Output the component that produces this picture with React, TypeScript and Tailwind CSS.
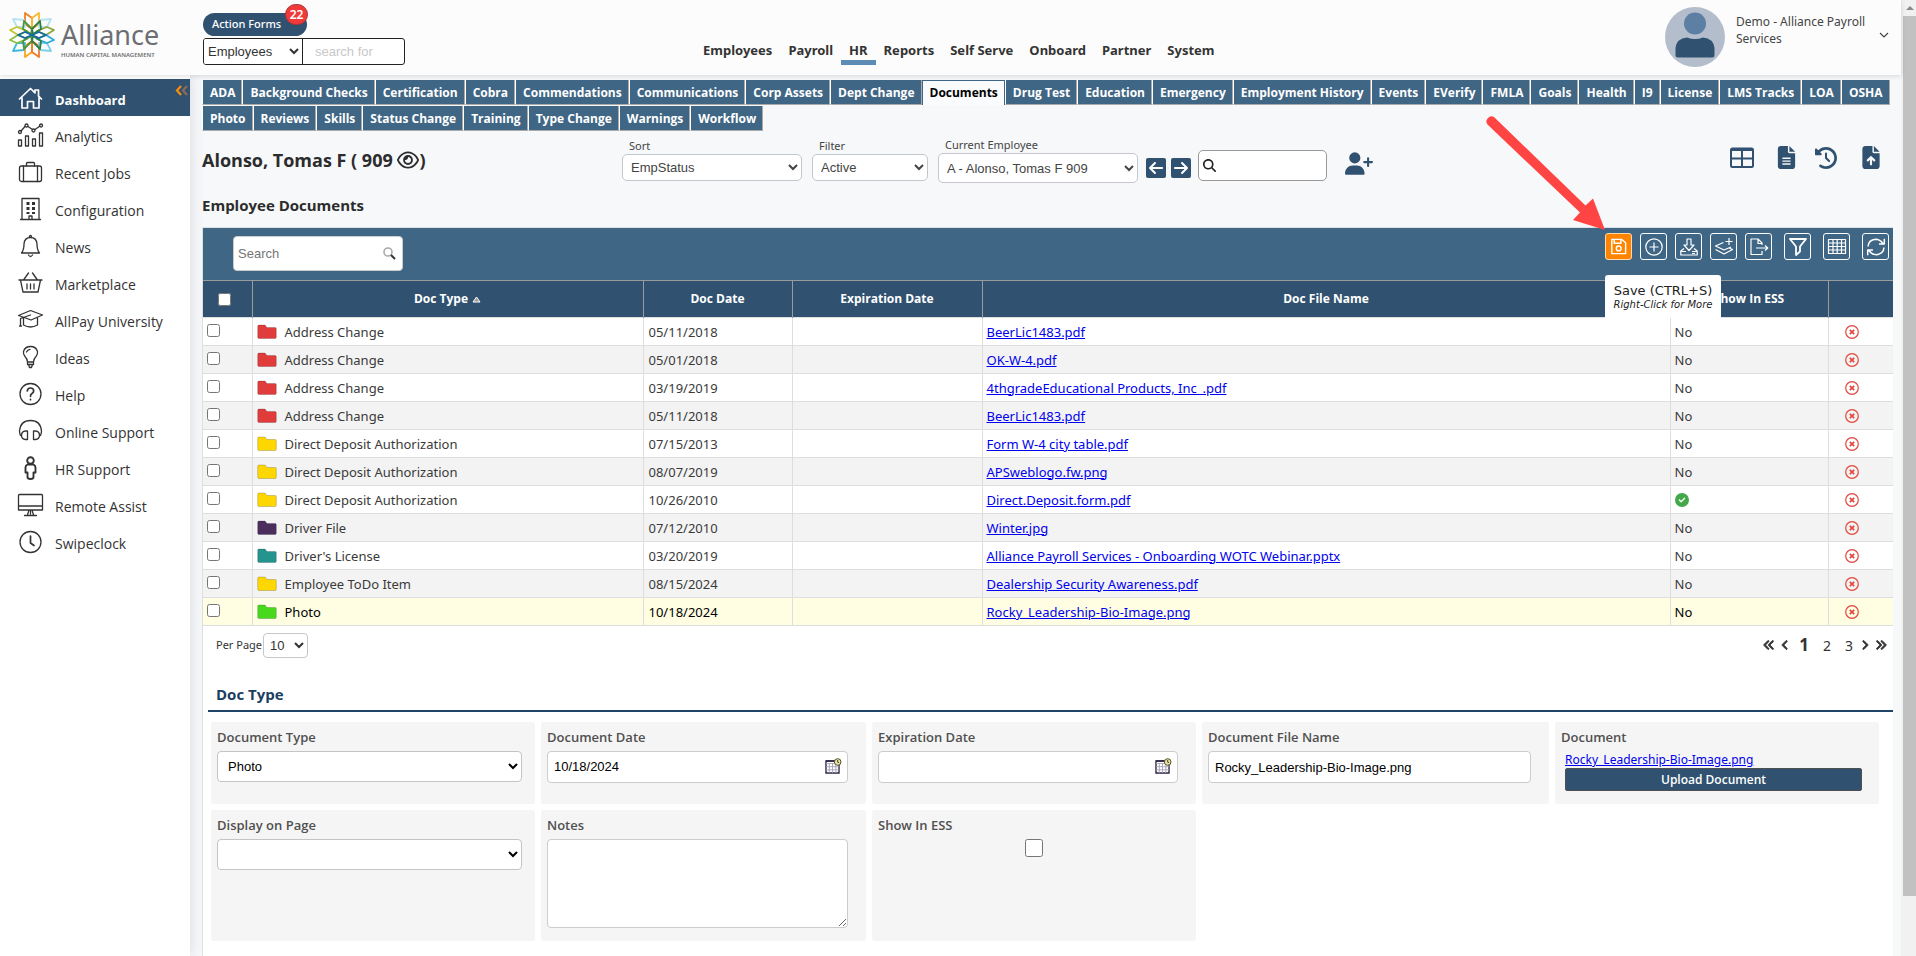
import React from "react";
import {
  FaAngleLeft,
  FaAngleRight,
  FaAnglesLeft,
  FaAnglesRight,
  FaArrowLeft,
  FaArrowRight,
  FaCircleCheck,
  FaClockRotateLeft,
  FaFileArrowUp,
  FaFileLines,
  FaMagnifyingGlass,
  FaRegEye,
  FaUserPlus,
} from "react-icons/fa6";

type IconProps = { className?: string; children: React.ReactNode };

function Line({ className = "size-6", children }: IconProps) {
  return (
    <svg
      viewBox="0 0 26 24"
      className={className}
      fill="none"
      stroke="currentColor"
      strokeWidth="1.3"
      strokeLinecap="round"
      strokeLinejoin="round"
      aria-hidden="true"
    >
      {children}
    </svg>
  );
}

const sideItems: { label: string; icon: React.ReactNode }[] = [
  {
    label: "Dashboard",
    icon: (
      <g strokeWidth="1.7">
        <path d="M2 13 13 2.500l4.500 4.300V4h3.500v6.200l3 2.800M4.500 11.500V22H10v-6.500h6V22h5.500V11.500" />
      </g>
    ),
  },
  {
    label: "Analytics",
    icon: (
      <>
        <path d="M1 17h3v6H1zM8 13h3v10H8zM15 16h3v7h-3zM22 10h3v13h-3z" />
        <path d="m3.500 8 4-4.500M10.500 3.500 15 6.500M17.500 6.500l5-3.500" />
        <circle cx="2.500" cy="9" r="1.500" />
        <circle cx="9" cy="2.500" r="1.500" />
        <circle cx="16" cy="7.500" r="1.500" />
        <circle cx="23.500" cy="2.500" r="1.500" />
      </>
    ),
  },
  {
    label: "Recent Jobs",
    icon: (
      <>
        <rect x="2" y="6" width="22" height="15.500" rx="2" />
        <path d="M9 6V3.500q0-1 1-1h6q1 0 1 1V6M6 6v15.500M20 6v15.500" />
      </>
    ),
  },
  {
    label: "Configuration",
    icon: (
      <>
        <path d="M4.500 22.500v-21h17v21M3 22.500h20M11.500 22.500V19h3v3.500" />
        <g fill="currentColor" stroke="none">
          <path d="M9 5h3v3H9zM14.500 5h3v3h-3zM9 10h3v3H9zM14.500 10h3v3h-3zM9 15h3v2H9zM14.500 15h3v2h-3z" />
        </g>
      </>
    ),
  },
  {
    label: "News",
    icon: (
      <path d="M4 19q2.500-3 2.500-9Q7 3.500 13 3.500T19.500 10q0 6 2.500 9ZM11.800 3.500q0-2 1.200-2t1.200 2M11 21q2 3 4 0" />
    ),
  },
  {
    label: "Marketplace",
    icon: (
      <path d="M1.500 9h23M3 9l2.500 12h15L23 9M11 2 6 9M15 2l5 7M9.500 13v5M13 13v5M16.500 13v5" />
    ),
  },
  {
    label: "AllPay University",
    icon: (
      <path d="M1 7.500 13 2.500 25 7 13.500 12ZM6 10v7q7 4 14 0v-7.500M13 7 3 10.500V18M2 18h2" />
    ),
  },
  {
    label: "Ideas",
    icon: (
      <path d="M10 17q0-3-2.500-5.500Q5.500 9 6 6.500 7.500 1.500 13 1.500t7 5q.5 2.500-1.500 5Q16 14 16 17ZM10 17v2.500h6V17M11 19.500l1 3h2l1-3M9 7q1-2.500 3.500-2.700" />
    ),
  },
  {
    label: "Help",
    icon: (
      <>
        <circle cx="13" cy="12" r="10.500" />
        <path strokeWidth="1.700" d="M9.800 9q.2-3 3.200-3t3.200 2.800q0 1.700-1.700 2.700T13 14.300M13 17.300v.4" />
      </>
    ),
  },
  {
    label: "Online Support",
    icon: (
      <>
        <path d="M3 16.500Q2 14 2 12 3 1.500 13 1.500T24 12q0 2-1 4.500" />
        <path d="M10 12v8.500H8q-4-.5-4-4.300T8 12ZM16 12v8.500h2q4-.5 4-4.300T18 12Z" />
      </>
    ),
  },
  {
    label: "HR Support",
    icon: (
      <g strokeWidth="1.900">
        <circle cx="13" cy="4.500" r="3.300" />
        <path d="M10 8.500h6q2 1 2 3v5h-2V21q0 2-3 2t-3-2v-4.500H8v-5q0-2 2-3Z" />
      </g>
    ),
  },
  {
    label: "Remote Assist",
    icon: (
      <path d="M2 1.500h22q1 0 1 1V17H1V2.500q0-1 1-1ZM1 13h24M11.500 17l-1.500 5M14.500 17l1.500 5M7 22.500h12M13 18v3" />
    ),
  },
  {
    label: "Swipeclock",
    icon: (
      <>
        <circle cx="13" cy="12" r="10.500" />
        <path strokeWidth="1.700" d="M13 6v7l3.500 2.500" />
      </>
    ),
  },
];

const navItems = ["Employees", "Payroll", "HR", "Reports", "Self Serve", "Onboard", "Partner", "System"];

const tabs = [
  "ADA", "Background Checks", "Certification", "Cobra", "Commendations", "Communications",
  "Corp Assets", "Dept Change", "Documents", "Drug Test", "Education", "Emergency",
  "Employment History", "Events", "EVerify", "FMLA", "Goals", "Health", "I9", "License",
  "LMS Tracks", "LOA", "OSHA", "Photo", "Reviews", "Skills", "Status Change", "Training",
  "Type Change", "Warnings", "Workflow",
];

const RED = "#e03c3c";
const YELLOW = "#ffd700";

const rows = [
  { type: "Address Change", color: RED, date: "05/11/2018", file: "BeerLic1483.pdf", ess: false },
  { type: "Address Change", color: RED, date: "05/01/2018", file: "OK-W-4.pdf", ess: false },
  { type: "Address Change", color: RED, date: "03/19/2019", file: "4thgradeEducational Products, Inc_.pdf", ess: false },
  { type: "Address Change", color: RED, date: "05/11/2018", file: "BeerLic1483.pdf", ess: false },
  { type: "Direct Deposit Authorization", color: YELLOW, date: "07/15/2013", file: "Form W-4 city table.pdf", ess: false },
  { type: "Direct Deposit Authorization", color: YELLOW, date: "08/07/2019", file: "APSweblogo.fw.png", ess: false },
  { type: "Direct Deposit Authorization", color: YELLOW, date: "10/26/2010", file: "Direct.Deposit.form.pdf", ess: true },
  { type: "Driver File", color: "#4b2e5e", date: "07/12/2010", file: "Winter.jpg", ess: false },
  { type: "Driver's License", color: "#23958e", date: "03/20/2019", file: "Alliance Payroll Services - Onboarding WOTC Webinar.pptx", ess: false },
  { type: "Employee ToDo Item", color: YELLOW, date: "08/15/2024", file: "Dealership Security Awareness.pdf", ess: false },
  { type: "Photo", color: "#48d91f", date: "10/18/2024", file: "Rocky_Leadership-Bio-Image.png", ess: false },
];

const petals: [string, string][] = [
  ["M-7-22 0-17V-6L-7-11Z", "#f08022"],
  ["M7-22 0-17V-6L7-11Z", "#fbb92e"],
  ["M-7 22 0 17V6L-7 11Z", "#fba51c"],
  ["M7 22 0 17V6L7 11Z", "#f07a22"],
  ["M-19-16-8-15-7-8-15-8Z", "#b5e3f2"],
  ["M19-16 8-15 7-8 15-8Z", "#b5e3f2"],
  ["M-19 16-8 15-7 8-15 8Z", "#3fb8de"],
  ["M19 16 8 15 7 8 15 8Z", "#7fd0e8"],
  ["M-22-5-15-8-5-4-14 0Z", "#c3c62f"],
  ["M22-5 15-8 5-4 14 0Z", "#8fa63a"],
  ["M-22 5-15 8-5 4-14 0Z", "#8dc040"],
  ["M22 5 15 8 5 4 14 0Z", "#2fa9dc"],
  ["M0-6-8-14-9-6-1-1Z", "#4f9440"],
  ["M0-6 8-14 9-6 1-1Z", "#2f7f45"],
  ["M0 6-8 14-9 6-1 1Z", "#4f9440"],
  ["M0 6 8 14 9 6 1 1Z", "#2f7f45"],
  ["M-14 0-7-3 0 0-7 3Z", "#12699c"],
  ["M14 0 7-3 0 0 7 3Z", "#12699c"],
];

function Logo() {
  return (
    <a href="#home" className="flex items-center gap-[5px] pl-2" aria-label="Alliance Human Capital Management">
      <svg viewBox="-24 -24 48 48" className="size-12" fill="none" strokeWidth="1.800" strokeLinejoin="round" aria-hidden="true">
        {petals.map(([d, c]) => (
          <path key={d} d={d} stroke={c} />
        ))}
      </svg>
      <span className="flex flex-col pt-2">
        <span className="text-[27px] leading-8 text-[#6d6e72]">Alliance</span>
        <span className="text-[6px] leading-2 font-semibold whitespace-nowrap text-[#6d6e72]">HUMAN CAPITAL MANAGEMENT</span>
      </span>
    </a>
  );
}

function Header() {
  return (
    <header className="relative z-10 flex h-[75px] items-start bg-[#fcfcfc] shadow-[0_1px_5px_rgba(0,0,0,0.14)]">
      <div className="w-[203px] pt-[11px]">
        <Logo />
      </div>
      <div className="w-[492px] pt-[13px]">
        <button className="relative flex h-[23px] w-[104px] items-center rounded-full bg-[#305270] pl-[9px] text-[11px] font-medium text-white">
          Action Forms
          <span className="absolute -top-[9px] -right-px flex h-[21px] w-[23px] items-center justify-center rounded-full border border-[#a33] bg-[#f03a3a] text-[12px] font-semibold">
            22
          </span>
        </button>
        <div className="mt-0.5 flex h-[27px] w-[202px] overflow-hidden rounded-[3px] border border-[#222] bg-white font-[Liberation_Sans] text-[13px] text-[#333]">
          <select aria-label="Search category" className="w-[99px] bg-white">
            <option>Employees</option>
          </select>
          <input
            aria-label="Search for"
            placeholder="search for"
            className="w-[102px] border-l border-[#222] pl-3 placeholder:text-[#c8c8c8]"
          />
        </div>
      </div>
      <nav className="flex pt-10 text-[13px] font-bold text-[#333]">
        {navItems.map((n) => (
          <a
            key={n}
            href={"#" + n}
            className={
              n === "HR"
                ? "h-[25px] border-b-5 border-[#5c8bb3] px-2 leading-5"
                : "h-[25px] px-2 leading-5"
            }
          >
            {n}
          </a>
        ))}
      </nav>
      <div className="ml-auto flex pt-[7px] pr-3">
        <svg viewBox="0 0 60 60" className="size-[60px]" aria-hidden="true">
          <circle cx="30" cy="30" r="30" fill="#b3bdcb" />
          <circle cx="30" cy="16.500" r="11" fill="#5c7fa3" />
          <path d="M10.500 48V41q1-9.500 11.500-10.500 8 3 16 0Q48.500 31.500 49.500 41v7q0 2.500-2.500 2.500H13q-2.500 0-2.500-2.500Z" fill="#305270" />
        </svg>
        <p className="ml-[11px] w-[143px] pt-1.5 text-[12px] leading-[17px] text-[#444]">
          Demo - Alliance Payroll Services
        </p>
        <button aria-label="Account menu" className="mt-6 h-2">
          <svg viewBox="0 0 10 6" className="h-1.5 w-2.5" fill="none" stroke="#444" strokeWidth="1.200" aria-hidden="true">
            <path d="m1 1 4 4 4-4" />
          </svg>
        </button>
      </div>
    </header>
  );
}

function Sidebar() {
  return (
    <aside className="w-[190px] shrink-0 bg-white pt-1 shadow-[0_0_14px_rgba(40,50,70,0.16)]">
      <nav className="font-[Open_Sans] text-[14px] font-medium text-[#333]">
        {sideItems.map((s, i) => (
          <a
            key={s.label}
            href={"#" + s.label}
            className={
              i === 0
                ? "relative flex h-[37px] items-center bg-[#305270] pl-[17px] text-[13px] font-bold text-white"
                : "relative flex h-[37px] items-center pl-[17px]"
            }
          >
            <Line className="h-6 w-[27px] shrink-0">{s.icon}</Line>
            <span className="ml-[11px] pt-1 leading-5">{s.label}</span>
            {i === 0 && (
              <svg viewBox="0 0 13 11" className="absolute top-1.5 right-0.5 h-[11px] w-[13px]" fill="none" strokeWidth="2.200" aria-hidden="true">
                <path d="M6 1 2 5.500 6 10" stroke="#f78b0c" />
                <path d="m12 1-4 4.500 4 4.500" stroke="#8a6d55" />
              </svg>
            )}
          </a>
        ))}
      </nav>
    </aside>
  );
}

function Tabs() {
  return (
    <nav className="-mr-2 flex flex-wrap pt-[5px] font-[Open_Sans] text-[12px] leading-[25px] font-bold">
      {tabs.map((t) => (
        <a
          key={t}
          href={"#" + t}
          className={
            t === "Documents"
              ? "mb-px h-[25px] border-x border-t border-[#406685] bg-[#fafbfc] pr-1.5 pl-[7px] leading-6 text-black"
              : "mb-px h-[25px] border border-t-0 border-[#aaa] border-l-white bg-[#406685] pr-1.5 pl-[7px] text-white"
          }
        >
          {t}
        </a>
      ))}
    </nav>
  );
}

function EmployeeBar() {
  return (
    <div className="flex h-[59px] items-start">
      <h1 className="w-[420px] pt-3.5 font-[Open_Sans] text-[18px] leading-7 font-bold text-[#2c2c2c]">
        Alonso, Tomas F ( 909 <FaRegEye className="inline size-[22px] align-[-4px]" aria-label="Show number" />)
      </h1>
      <div className="flex w-[180px] flex-col pt-1.5">
        <label htmlFor="sort" className="pl-[7px] text-[11px] leading-4 text-[#444]">Sort</label>
        <select id="sort" className="h-[27px] rounded-[5px] border border-[#c4c7cb] bg-white pl-1 font-[Liberation_Sans] text-[13px] text-[#444]">
          <option>EmpStatus</option>
        </select>
      </div>
      <div className="ml-2.5 flex w-[116px] flex-col pt-1.5">
        <label htmlFor="filter" className="pl-[7px] text-[11px] leading-4 text-[#444]">Filter</label>
        <select id="filter" className="h-[27px] rounded-[5px] border border-[#c4c7cb] bg-white pl-1 font-[Liberation_Sans] text-[13px] text-[#444]">
          <option>Active</option>
        </select>
      </div>
      <div className="ml-2.5 flex w-[200px] flex-col pt-[5px]">
        <label htmlFor="current" className="pl-[7px] text-[11px] leading-4 text-[#444]">Current Employee</label>
        <select id="current" className="h-[30px] rounded-[5px] border border-[#c4c7cb] bg-white pl-1 font-[Liberation_Sans] text-[13px] text-[#444]">
          <option>A - Alonso, Tomas F 909</option>
        </select>
      </div>
      <button aria-label="Previous employee" className="mt-[26px] ml-2 flex size-5 items-center justify-center rounded-[2px] bg-[#305270] text-white">
        <FaArrowLeft className="size-4" />
      </button>
      <button aria-label="Next employee" className="mt-[26px] ml-[5px] flex size-5 items-center justify-center rounded-[2px] bg-[#305270] text-white">
        <FaArrowRight className="size-4" />
      </button>
      <label className="mt-[18px] ml-[7px] flex h-[31px] w-[129px] items-center rounded-[5px] border border-[#999] bg-white pl-1">
        <FaMagnifyingGlass className="size-[13px] shrink-0 text-[#222]" />
        <input aria-label="Find employee" className="w-full min-w-0 bg-transparent px-1 text-[13px] outline-none" />
      </label>
      <button aria-label="Add employee" className="mt-5 ml-[18px] text-[#305270]">
        <FaUserPlus className="h-[23px] w-7" />
      </button>
      <div className="ml-auto flex items-center pt-3.5 pr-[13px] text-[#305270]">
        <button aria-label="Grid view" className="mr-[21px]">
          <svg viewBox="0 0 24 21" className="h-[21px] w-6" fill="none" stroke="currentColor" strokeWidth="2" aria-hidden="true">
            <rect x="1" y="1.500" width="22" height="18.500" rx="1.500" />
            <path d="M1 3h22M1 11.500h22M12 3v17" />
          </svg>
        </button>
        <button aria-label="Report" className="mr-[17px]"><FaFileLines className="h-[23px] w-[23px]" /></button>
        <button aria-label="History" className="mr-[25px]"><FaClockRotateLeft className="size-[22px]" /></button>
        <button aria-label="Upload file"><FaFileArrowUp className="h-[23px] w-[18px]" /></button>
      </div>
    </div>
  );
}

const toolIcons: { label: string; wide: boolean; art: React.ReactNode }[] = [
  {
    label: "Add",
    wide: false,
    art: (
      <>
        <circle cx="10" cy="10" r="8.200" />
        <path d="M10 5.500v9M5.500 10h9" />
      </>
    ),
  },
  {
    label: "Download",
    wide: false,
    art: <path d="M8 2h4v6h3l-5 5.500L5 8h3ZM5 11.500 1.800 14v4h16.400v-4L15 11.500M1.800 14.500H7M13 14.500h5.200M13 16.500h3" />,
  },
  {
    label: "Add layer",
    wide: false,
    art: <path d="M9.500 5.500 1.500 9l8.500 4 7-3M1.500 12.500 10 17l8.500-4.500-3-1.300M15 1v7M11.500 4.500h7" />,
  },
  {
    label: "Export",
    wide: false,
    art: <path d="M13 8V6L9 2H2v15.500h11V14M9 2v4.500h4M7 11h11.500M16 8.500l2.800 2.500-2.800 2.500" />,
  },
  { label: "Filter", wide: true, art: <path strokeWidth="1.800" d="M2 2h16l-6 7.500v5L8 18V9.500Z" /> },
  {
    label: "Columns",
    wide: true,
    art: <path d="M1.500 2.500h17v14h-17ZM1.500 6h17M1.500 9.500h17M1.500 13h17M6 2.500v14M10.200 2.500v14M14.500 2.500v14" />,
  },
  {
    label: "Refresh",
    wide: true,
    art: <path strokeWidth="1.500" d="M2 9.500Q2.500 3 9.500 2.300q4.500 0 7.500 4.200M18.300 1.800V7H13M18 10.500q-.5 6.500-7.500 7.200-4.500 0-7.500-4.200M1.700 18.200V13H7" />,
  },
];

function Toolbar() {
  return (
    <div className="flex h-[53px] items-start border-t border-[#dcdfe3] bg-[#406685]">
      <label className="mt-2 ml-[30px] flex h-[35px] w-[170px] items-center rounded-[4px] border border-[#ccc] bg-white pr-1.5">
        <input
          aria-label="Search documents"
          placeholder="Search"
          className="w-full min-w-0 bg-transparent pl-1 font-[Liberation_Sans] text-[13px] outline-none placeholder:text-[#757575]"
        />
        <svg viewBox="0 0 13 13" className="size-[13px] shrink-0" fill="none" aria-hidden="true">
          <circle cx="5" cy="5" r="4" stroke="#aaa" strokeWidth="1.600" />
          <path d="m8 8 4 4" stroke="#333" strokeWidth="2" />
        </svg>
      </label>
      <div className="relative mt-[5px] mr-1 ml-auto flex">
        <button aria-label="Save" className="flex size-[27px] items-center justify-center rounded-[3px] border border-[#ffd9ad] bg-[#ff8400] text-white">
          <svg viewBox="0 0 20 20" className="size-[19px]" fill="none" stroke="currentColor" strokeWidth="1.500" aria-hidden="true">
            <path d="M3 2.500h10.500L17.500 6v11.500H3ZM5.500 2.500v4h7v-4" />
            <circle cx="10.200" cy="12" r="2.500" />
          </svg>
        </button>
        {toolIcons.map((t) => (
          <button
            key={t.label}
            aria-label={t.label}
            className={
              t.wide
                ? "ml-3 flex size-[27px] items-center justify-center rounded-[3px] border border-white text-white"
                : "ml-2 flex size-[27px] items-center justify-center rounded-[3px] border border-white text-white"
            }
          >
            <svg viewBox="0 0 20 20" className="size-[20px]" fill="none" stroke="currentColor" strokeWidth="1.200" strokeLinejoin="round" aria-hidden="true">
              {t.art}
            </svg>
          </button>
        ))}
        <div role="tooltip" className="absolute top-[42px] left-0 z-10 h-[43px] w-[116px] rounded-t-[3px] bg-white pt-2 text-center font-[DejaVu_Sans] text-[#222]">
          <p className="text-[13px] leading-4">Save (CTRL+S)</p>
          <p className="text-[10px] leading-3 italic">Right-Click for More</p>
        </div>
        <svg viewBox="0 0 122 116" className="pointer-events-none absolute -top-[118px] -left-[120px] h-[116px] w-[122px]" fill="#ff4444" aria-hidden="true">
          <path d="M9.500 2.500 100.500 90.500l7.500-7L120 115 88 105l7-7.500L2.500 9.500A5 5 0 0 1 9.500 2.500Z" />
        </svg>
      </div>
    </div>
  );
}

function Folder({ color }: { color: string }) {
  return (
    <svg viewBox="0 0 20 16" className="h-4 w-5 shrink-0" aria-hidden="true">
      <path d="M2 1h6l2 2.500h8q1.300 0 1.300 1.300v8.400q0 1.300-1.300 1.300H2q-1.300 0-1.300-1.300V2.300Q.7 1 2 1Z" fill={color} stroke="#000" strokeOpacity="0.180" />
    </svg>
  );
}

function DocumentTable() {
  const head = "border-x border-[#9a9a9a] font-bold first:border-l-0 last:border-r-0";
  const cell = "border-x border-[#dedede] first:border-l-0 last:border-r-0";
  return (
    <table className="w-full table-fixed border-collapse text-[13px] text-[#3a3a3a]">
      <colgroup>
        <col className="w-[49px]" />
        <col className="w-[391px]" />
        <col className="w-[149px]" />
        <col className="w-[190px]" />
        <col />
        <col className="w-[158px]" />
        <col className="w-[65px]" />
      </colgroup>
      <thead>
        <tr className="h-[37px] border-t border-[#9a9a9a] bg-[#305270] font-[Open_Sans] text-[12px] text-white">
          <th className={head}>
            <input type="checkbox" aria-label="Select all documents" className="mr-1.5 block size-[13px] justify-self-center" />
          </th>
          <th className={head}>
            Doc Type{" "}
            <svg viewBox="0 0 9 7" className="ml-px inline h-[7px] w-[9px] align-baseline" fill="#999" stroke="#fff" aria-hidden="true">
              <path d="M4.500 1 8 6H1Z" />
            </svg>
          </th>
          <th className={head}>Doc Date</th>
          <th className={head}>Expiration Date</th>
          <th className={head}>Doc File Name</th>
          <th className={head}>Show In ESS</th>
          <th className={head} aria-label="Delete" />
        </tr>
      </thead>
      <tbody>
        {rows.map((r, i) => (
          <tr
            key={i}
            className={
              i === rows.length - 1
                ? "h-7 border-y border-[#dedede] bg-[#fffee3] text-black"
                : "h-7 border-y border-[#dedede] bg-white even:bg-[#f3f3f3]"
            }
          >
            <td className={cell}>
              <input type="checkbox" aria-label={"Select " + r.file} className="mb-0.5 ml-1 block size-[13px]" />
            </td>
            <td className={cell}>
              <span className="flex items-center gap-2 pl-1">
                <Folder color={r.color} />
                <span className="pt-px leading-5">{r.type}</span>
              </span>
            </td>
            <td className={cell + " pt-0.5 pl-[5px]"}>{r.date}</td>
            <td className={cell} />
            <td className={cell + " pt-0.5 pl-1"}>
              <a href={"#" + i} className="text-[#0000ee] underline">{r.file}</a>
            </td>
            <td className={cell + " pt-0.5 pl-1"}>
              {r.ess ? <FaCircleCheck className="mb-0.5 size-3.5 text-[#43a84a]" aria-label="Yes" /> : "No"}
            </td>
            <td className={cell + " pl-4"}>
              <button aria-label={"Delete " + r.file} className="block">
                <svg viewBox="0 0 14 14" className="size-3.5" fill="none" stroke="#e2483d" aria-hidden="true">
                  <circle cx="7" cy="7" r="6.300" strokeWidth="1.200" />
                  <path d="m4.800 4.800 4.400 4.400M9.200 4.800 4.800 9.200" strokeWidth="1.700" />
                </svg>
              </button>
            </td>
          </tr>
        ))}
      </tbody>
    </table>
  );
}

function Pager() {
  return (
    <div className="flex h-[38px] items-center pr-1.5 pl-[13px] text-[#333]">
      <label htmlFor="perpage" className="text-[11px]">Per Page</label>
      <select id="perpage" className="ml-px h-[25px] w-[45px] rounded-[4px] border border-[#c4c7cb] bg-white pl-0.5 font-[Liberation_Sans] text-[13px]">
        <option>10</option>
      </select>
      <nav aria-label="Pages" className="ml-auto flex items-center text-[14px]">
        <a href="#first" aria-label="First page"><FaAnglesLeft strokeWidth="35" className="size-3" /></a>
        <a href="#prev" aria-label="Previous page" className="ml-1"><FaAngleLeft strokeWidth="35" className="h-3 w-3" /></a>
        <a href="#1" className="ml-2 text-[17px] leading-6 font-bold">1</a>
        <a href="#2" className="ml-3.5">2</a>
        <a href="#3" className="ml-3.5">3</a>
        <a href="#next" aria-label="Next page" className="ml-1.5"><FaAngleRight strokeWidth="35" className="h-3 w-3" /></a>
        <a href="#last" aria-label="Last page" className="ml-1"><FaAnglesRight strokeWidth="35" className="size-3" /></a>
      </nav>
    </div>
  );
}

function CalendarIcon() {
  return (
    <svg viewBox="0 0 17 16" className="h-4 w-[17px] shrink-0" fill="none" aria-hidden="true">
      <path d="M1 3h13v12H1z" fill="#fff" stroke="#2d2342" strokeWidth="1.400" />
      <path d="M1 5.500h13M1 8.700h13M1 11.800h13M4.300 5v10M7.500 5v10M10.800 5v10" stroke="#a5a3b5" strokeWidth="0.900" />
      <path d="M1 3h13" stroke="#2d2342" strokeWidth="1.500" />
      <circle cx="12.700" cy="4" r="3.300" fill="#e8e2a0" stroke="#55502f" />
      <path d="M12.700 2v2.200l1.300.5" stroke="#333" strokeWidth="0.900" />
    </svg>
  );
}

function Field({ id, label, children }: { id: string; label: string; children: React.ReactNode }) {
  return (
    <div className="flex flex-col rounded-[3px] bg-[#f5f5f5] pt-[5px] pl-1.5">
      <label htmlFor={id} className="font-[Open_Sans] text-[13px] leading-5 font-semibold text-[#505050]">{label}</label>
      <div className="pt-1">{children}</div>
    </div>
  );
}

function DateField({ id, value }: { id: string; value: string }) {
  return (
    <div className="mr-[18px] flex h-8 items-center rounded-[4px] border border-[#ccc] bg-white pr-[5px]">
      <input id={id} defaultValue={value} className="w-full min-w-0 bg-transparent pl-1.5 font-[Liberation_Sans] text-[13px] text-black outline-none" />
      <button aria-label="Pick a date" className="pb-0.5"><CalendarIcon /></button>
    </div>
  );
}

function DocForm() {
  return (
    <section>
      <div className="ml-[5px] border-b-2 border-[#1f4467] pt-4">
        <h2 className="pb-0.5 pl-2 font-[Open_Sans] text-[15px] leading-7 font-bold text-[#1a3f5f]">Doc Type</h2>
      </div>
      <div className="mt-2.5 mr-3.5 ml-2 grid grid-cols-[324fr_325fr_324fr_347fr_324fr] grid-rows-[82px_131px] gap-1.5">
        <Field id="doctype" label="Document Type">
          <select id="doctype" className="block h-[31px] w-[305px] rounded-[4px] border border-[#c4c4c4] bg-white pl-1.5 font-[Liberation_Sans] text-[13px] text-black">
            <option>Photo</option>
          </select>
        </Field>
        <Field id="docdate" label="Document Date"><DateField id="docdate" value="10/18/2024" /></Field>
        <Field id="expdate" label="Expiration Date"><DateField id="expdate" value="" /></Field>
        <Field id="filename" label="Document File Name">
          <div className="mr-[18px]">
            <input id="filename" defaultValue="Rocky_Leadership-Bio-Image.png" className="block h-8 w-full rounded-[4px] border border-[#ccc] bg-white pl-1.5 font-[Liberation_Sans] text-[13px] text-black" />
          </div>
        </Field>
        <Field id="upload" label="Document">
          <div className="mr-[17px] ml-1">
            <a href="#rocky" className="block text-[12px] leading-[17px] text-[#0000ee] underline">Rocky_Leadership-Bio-Image.png</a>
            <button id="upload" className="block h-[23px] w-full rounded-[2px] border border-[#505050] bg-[#305270] font-[Open_Sans] text-[12px] leading-5 font-semibold text-white">
              Upload Document
            </button>
          </div>
        </Field>
        <Field id="display" label="Display on Page">
          <select id="display" className="block h-[31px] w-[305px] rounded-[4px] border border-[#c4c4c4] bg-white pl-1.5 text-[13px] text-black">
            <option></option>
          </select>
        </Field>
        <Field id="notes" label="Notes">
          <div className="mr-[18px]">
            <textarea id="notes" className="block h-[89px] w-full rounded-[4px] border border-[#ccc] bg-white p-1.5 text-[13px]" />
          </div>
        </Field>
        <Field id="ess" label="Show In ESS">
          <div className="flex justify-center pr-1.5">
            <input id="ess" type="checkbox" className="size-[18px]" />
          </div>
        </Field>
      </div>
    </section>
  );
}

export default function App() {
  return (
    <div className="flex min-h-screen font-['Noto_Sans',sans-serif]">
      <div className="flex min-w-0 grow flex-col bg-[#f7f8fa]">
        <Header />
        <div className="flex grow">
          <Sidebar />
          <main className="flex min-w-0 grow flex-col pr-2 pl-3">
            <Tabs />
            <EmployeeBar />
            <h2 className="h-9 font-[Open_Sans] text-[15px] leading-7 font-bold text-[#2c2c2c]">Employee Documents</h2>
            <div className="flex grow flex-col border-l border-[#dedede] bg-white">
              <Toolbar />
              <DocumentTable />
              <Pager />
              <DocForm />
            </div>
          </main>
        </div>
      </div>
      <div className="flex w-[15px] shrink-0 flex-col items-end bg-[#f1f1f1]" aria-hidden="true">
        <div className="flex h-4 w-[13px] items-center justify-center">
          <svg viewBox="0 0 8 4" className="h-1 w-2" fill="#8a8a8a"><path d="M4 0 8 4H0Z" /></svg>
        </div>
        <div className="h-[92vh] w-[13px] bg-[#c1c1c1]" />
      </div>
    </div>
  );
}
